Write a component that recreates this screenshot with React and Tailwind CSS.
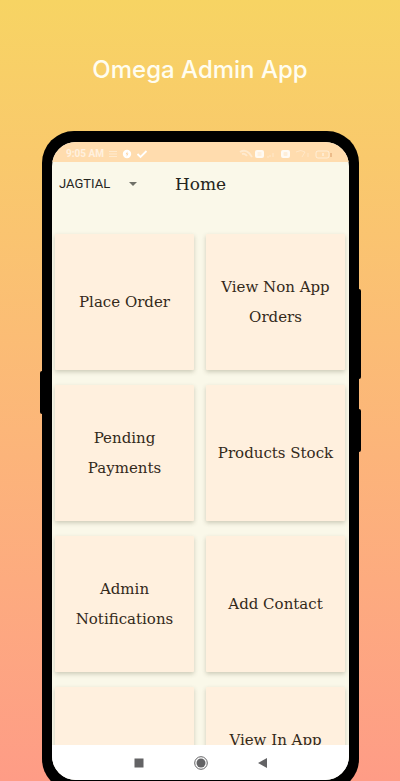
import React from "react";

const cards = [
  "Place Order",
  "View Non App Orders",
  "Pending Payments",
  "Products Stock",
  "Admin Notifications",
  "Add Contact",
  "",
  "View In App Orders",
];

function StatusBar() {
  return (
    <div className="flex h-5 shrink-0 items-center justify-between bg-[#ffdcae] pt-1 pr-4 pl-3.5 text-white">
      <div className="flex items-center gap-1 font-['Roboto',sans-serif] text-[10px] leading-3 font-bold">
        <span className="opacity-60">9:05 AM</span>
        <svg className="size-2.5 opacity-40" viewBox="0 0 10 10" stroke="currentColor" fill="none" aria-hidden="true">
          <path d="M1 2.5h8M1 5h8M1 7.5h8" />
        </svg>
        <svg className="size-2.5" viewBox="0 0 10 10" aria-hidden="true">
          <circle cx="5" cy="5" r="4.2" fill="currentColor" />
          <path d="M5.6 2.2 3.6 5.3h1.3l-.4 2.4 2-3.2H5.2z" fill="#ffd3a0" />
        </svg>
        <svg className="size-3" viewBox="0 0 12 12" stroke="currentColor" strokeWidth="1.8" fill="none" aria-hidden="true">
          <path d="m1.500 6 3 3L10.500 3" />
        </svg>
      </div>
      <svg className="h-3 w-[94px]" viewBox="0 0 94 12" fill="none" aria-hidden="true">
        <path d="M1 4q5-3 9 1l3 4M3 6q3-1 5 2" stroke="currentColor" strokeWidth="2" opacity=".4" />
        <rect x="16" y="2" width="9" height="8" rx="2" fill="currentColor" opacity=".85" />
        <path d="M18.500 5h4M18.500 7h4" stroke="#ffe9cc" />
        <path d="M28 9h2M31 7v2M34 5v4" stroke="currentColor" opacity=".35" />
        <rect x="42" y="2" width="9" height="8" rx="2" fill="currentColor" opacity=".85" />
        <rect x="44.500" y="4" width="4" height="4" rx="1" fill="#ffeed8" />
        <path d="M57 4q5-3 9 0l-3 5M69 5v4" stroke="currentColor" opacity=".3" />
        <rect x="77" y="3" width="13" height="7" rx="2" stroke="currentColor" opacity=".5" />
        <path d="M84 5v3" stroke="currentColor" opacity=".8" />
        <path d="M92 5v4" stroke="#d99a65" />
      </svg>
    </div>
  );
}

function AppBar() {
  return (
    <header className="grid h-[43px] shrink-0 grid-cols-[1fr_auto_1fr] items-center px-[7px]">
      <div className="relative w-20">
        <select
          aria-label="Branch"
          className="block h-8 w-full appearance-none bg-transparent font-['Roboto',sans-serif] text-[13px] leading-6 text-[#26261f]"
        >
          <option>JAGTIAL</option>
        </select>
        <svg className="pointer-events-none absolute top-3.5 right-0.5 h-1 w-2" viewBox="0 0 8 4" aria-hidden="true">
          <path d="M0 0h8L4 4z" fill="#6f7068" />
        </svg>
      </div>
      <h2 className="font-['DejaVu_Serif',serif] text-[17px] leading-6 text-[#24241c]">
        Home
      </h2>
    </header>
  );
}

function NavBar() {
  return (
    <nav className="flex h-[35px] shrink-0 items-center justify-center gap-12 bg-white text-[#636365]">
      <button type="button" aria-label="Recent apps">
        <svg className="size-3.5" viewBox="0 0 14 14" aria-hidden="true">
          <rect x="2.500" y="2.500" width="9" height="9" fill="currentColor" />
        </svg>
      </button>
      <button type="button" aria-label="Home screen">
        <svg className="size-3.5" viewBox="0 0 14 14" aria-hidden="true">
          <circle cx="7" cy="7" r="6.300" fill="none" stroke="currentColor" />
          <circle cx="7" cy="7" r="4.500" fill="currentColor" />
        </svg>
      </button>
      <button type="button" aria-label="Back">
        <svg className="size-3.5" viewBox="0 0 14 14" aria-hidden="true">
          <path d="M11 2v10L2 7z" fill="currentColor" />
        </svg>
      </button>
    </nav>
  );
}

export default function App() {
  return (
    <div className="flex h-screen flex-col overflow-hidden bg-linear-to-b from-[#f7d463] to-[#fe9c86]">
      <h1 className="shrink-0 pt-14 pb-[47px] text-center font-['Inter',sans-serif] text-[24px] leading-7 font-medium text-[#fffdf0]">
        Omega Admin App
      </h1>
      <div className="relative mr-[41px] -mb-2.5 ml-[42px] flex min-h-0 flex-1 flex-col rounded-[32px] bg-black px-2.5 pt-[11px] pb-[11px]">
        <div className="absolute top-[240px] -left-0.5 h-[43px] w-1 rounded-xs bg-black" />
        <div className="absolute top-[158px] -right-0.5 h-[90px] w-1 rounded-xs bg-black" />
        <div className="absolute top-[278px] -right-0.5 h-[43px] w-1 rounded-xs bg-black" />
        <div className="flex min-h-0 flex-1 flex-col overflow-hidden rounded-[24px] bg-[#faf8e9]">
          <StatusBar />
          <AppBar />
          <main className="min-h-0 flex-1 overflow-hidden pt-[29px] pr-1 pl-[3px]">
            <div className="grid grid-cols-2 gap-x-3 gap-y-[15px]">
              {cards.map((label, i) => (
                <button
                  key={i}
                  type="button"
                  className="flex h-[136px] items-center justify-center rounded-[1px] bg-[#fff0de] px-2 text-center font-['DejaVu_Serif',serif] text-[15px] leading-[30px] text-[#33291a] shadow-[0_2px_4px_rgba(70,70,40,0.25)]"
                >
                  {label}
                </button>
              ))}
            </div>
          </main>
          <NavBar />
        </div>
      </div>
    </div>
  );
}
